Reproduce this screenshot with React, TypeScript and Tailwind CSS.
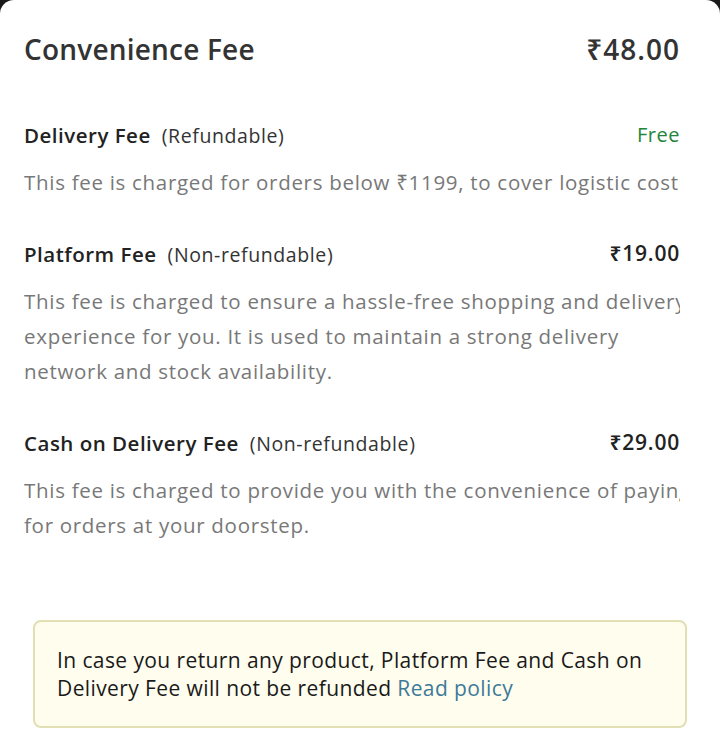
const font = { fontFamily: "'Open Sans', 'Noto Sans', sans-serif" };

function FeeRow(props: {
    title: string,
    note: string,
    amount: string,
    amountClass: string,
    description: string,
    className?: string,
}) {
    return (
        <section className={props.className}>
            <div className="flex items-center justify-between h-[28px]">
                <div className="flex items-baseline gap-[11px]">
                    <span className="text-[20.5px] tracking-[0.5px] font-semibold text-[#222222]">{props.title}</span>
                    <span className="text-[19.5px] tracking-[0.6px] text-[#333333]">{props.note}</span>
                </div>
                <span className={props.amountClass}>{props.amount}</span>
            </div>
            <div className="mt-[16px] overflow-hidden">
                <p className="w-[668px] text-[20.5px] tracking-[0.7px] leading-[35px] text-[#787878]">
                    {props.description}
                </p>
            </div>
        </section>
    );
}

export default function App() {
    return (
        <div className="bg-[#1a1a1a] min-h-screen" style={font}>
            <div className="bg-white rounded-t-[14px] h-[738px] pl-6 pr-10 pt-[31px]">
                <header className="flex items-center justify-between h-[36px]">
                    <h1 className="text-[28px] tracking-[0.2px] font-semibold text-[#333333]">Convenience Fee</h1>
                    <span className="text-[28px] tracking-[1px] font-semibold text-[#333333]">₹48.00</span>
                </header>

                <FeeRow
                    className="mt-[54px]"
                    title="Delivery Fee"
                    note="(Refundable)"
                    amount="Free"
                    amountClass="text-[20px] tracking-[0.5px] text-[#22853a]"
                    description="This fee is charged for orders below ₹1199, to cover logistic cost" />
                <FeeRow
                    className="mt-[40px]"
                    title="Platform Fee"
                    note="(Non-refundable)"
                    amount="₹19.00"
                    amountClass="text-[21px] tracking-[0.8px] font-semibold text-[#222222]"
                    description="This fee is charged to ensure a hassle-free shopping and delivery experience for you. It is used to maintain a strong delivery network and stock availability." />
                <FeeRow
                    className="mt-[40px]"
                    title="Cash on Delivery Fee"
                    note="(Non-refundable)"
                    amount="₹29.00"
                    amountClass="text-[21px] tracking-[0.8px] font-semibold text-[#222222]"
                    description="This fee is charged to provide you with the convenience of paying for orders at your doorstep." />

                <div className="mt-[77px] -mr-[7px] ml-[9px] rounded-[8px] border-2 border-[#e3dfb4] bg-[#fffdee] px-[22px] py-[24px]">
                    <p className="text-[21px] tracking-[0.4px] leading-[28px] text-[#1a1a1a]">
                        In case you return any product, Platform Fee and Cash on Delivery Fee will not be refunded{" "}
                        <span className="text-[#3d7a99]">Read policy</span>
                    </p>
                </div>
            </div>
        </div>
    );
}
